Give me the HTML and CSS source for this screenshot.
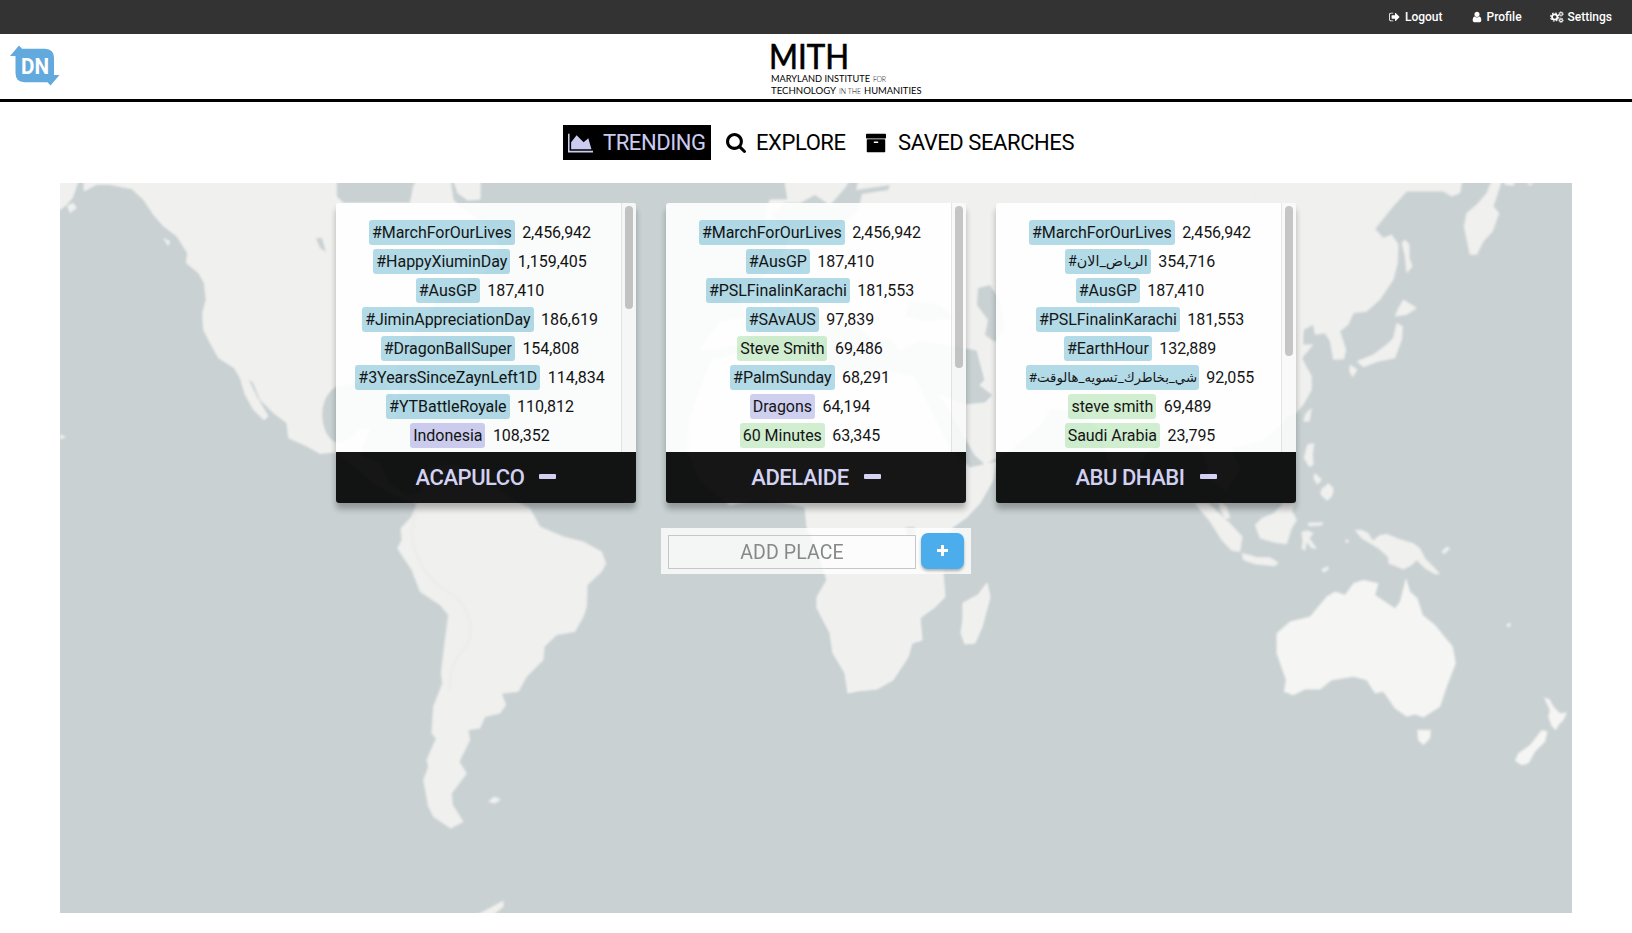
FILE: index.html
```html
<!DOCTYPE html>
<html lang="en">
<head>
<meta charset="utf-8">
<title>DocNow</title>
<link rel="stylesheet" href="styles.css">
</head>
<body>
<nav class="topbar">
  <a class="toplink"><svg class="topicon" viewBox="0 0 1792 1792"><path d="M640 1440q0 4 1 20t.5 26.5-3 23.5-10 19.5-20.5 6.5h-320q-119 0-203.5-84.5t-84.5-203.5v-704q0-119 84.5-203.5t203.5-84.5h320q13 0 22.5 9.5t9.5 22.5q0 4 1 20t.5 26.5-3 23.5-10 19.5-20.5 6.5h-320q-66 0-113 47t-47 113v704q0 66 47 113t113 47h312l11.5 1 11.5 3 8 5.5 7 9 2 13.5zm928-544q0 26-19 45l-544 544q-19 19-45 19t-45-19-19-45v-288h-448q-26 0-45-19t-19-45v-384q0-26 19-45t45-19h448v-288q0-26 19-45t45-19 45 19l544 544q19 19 19 45z"/></svg><span>Logout</span></a>
  <a class="toplink toplink-profile"><svg class="topicon" viewBox="0 0 1792 1792"><path d="M1536 1399q0 109-62.5 187t-150.5 78h-854q-88 0-150.5-78t-62.5-187q0-85 8.5-160.5t31.5-152 58.5-131 94-89 134.5-34.5q131 128 313 128t313-128q76 0 134.5 34.5t94 89 58.5 131 31.5 152 8.5 160.5zm-256-887q0 159-112.5 271.5t-271.5 112.5-271.5-112.5-112.5-271.5 112.5-271.5 271.5-112.5 271.5 112.5 112.5 271.5z"/></svg><span>Profile</span></a>
  <a class="toplink"><svg class="topicon topicon-wide" viewBox="0 0 14 12"><g fill="none" stroke="#fff"><circle cx="4.7" cy="6" r="2.7" stroke-width="1.8"/><circle cx="4.7" cy="6" r="4.1" stroke-width="1.1" stroke-dasharray="1.7 1.52"/><circle cx="11" cy="2.9" r="1.4" stroke-width="1.1"/><circle cx="11" cy="2.9" r="2.3" stroke-width=".7" stroke-dasharray="1 .8"/><circle cx="11" cy="9.3" r="1.4" stroke-width="1.1"/><circle cx="11" cy="9.3" r="2.3" stroke-width=".7" stroke-dasharray="1 .8"/></g></svg><span>Settings</span></a>
</nav>
<header class="header">
  <svg class="dn-logo" viewBox="0 0 50 42"><path d="M0 11 9 .5l3 3.2h23Q44 4 44 13v17h5.5L40.500 40.500 37.500 37.300H14.500Q5.500 37 5.500 28V11z" fill="#62a9dd"/><text x="11" y="28.600" class="dn-text" textLength="28" lengthAdjust="spacingAndGlyphs">DN</text></svg>
  <svg class="mith-logo" viewBox="0 0 152 56">
    <text x="-2" y="27" class="mith-big" textLength="80" lengthAdjust="spacingAndGlyphs">MITH</text>
    <text x="0" y="40.300" class="mith-line" textLength="99" lengthAdjust="spacingAndGlyphs">MARYLAND INSTITUTE</text>
    <text x="102" y="40.300" class="mith-small" textLength="13">FOR</text>
    <text x="0" y="51.700" class="mith-line" textLength="65" lengthAdjust="spacingAndGlyphs">TECHNOLOGY</text>
    <text x="68" y="51.700" class="mith-small" textLength="22">IN THE</text>
    <text x="93" y="51.700" class="mith-line" textLength="57.500" lengthAdjust="spacingAndGlyphs">HUMANITIES</text>
  </svg>
</header>
<div class="tabs">
  <a class="tab tab-active"><svg class="tabicon tabicon-chart" viewBox="0 0 2048 1792"><path d="M2048 1536v128h-2048v-1536h128v1408h1920zm-384-1024l256 896h-1664v-576l448-576 576 576z"/></svg><span>TRENDING</span></a>
  <a class="tab tab-explore"><svg class="tabicon" viewBox="64 128 1664 1664"><path d="M1216 832q0-185-131.500-316.500t-316.500-131.500-316.500 131.500-131.500 316.500 131.500 316.500 316.500 131.500 316.500-131.500 131.500-316.500zm512 832q0 52-38 90t-90 38q-54 0-90-38l-343-342q-179 124-399 124-143 0-273.500-55.500t-225-150-150-225-55.500-273.500 55.500-273.500 150-225 225-150 273.500-55.500 273.500 55.500 225 150 150 225 55.500 273.500q0 220-124 399l343 343q37 37 37 90z"/></svg><span>EXPLORE</span></a>
  <a class="tab tab-saved"><svg class="tabicon" viewBox="64 64 1664 1664"><path d="M1088 832q0-26-19-45t-45-19h-256q-26 0-45 19t-19 45 19 45 45 19h256q26 0 45-19t19-45zm576-192v960q0 26-19 45t-45 19h-1408q-26 0-45-19t-19-45v-960q0-26 19-45t45-19h1408q26 0 45 19t19 45zm64-448v256q0 26-19 45t-45 19h-1536q-26 0-45-19t-19-45v-256q0-26 19-45t45-19h1536q26 0 45 19t19 45z"/></svg><span>SAVED SEARCHES</span></a>
</div>
<main class="stage">
  <svg class="map" viewBox="60 183 1512 730">
    <defs><filter id="soft" x="-5%" y="-5%" width="110%" height="110%"><feGaussianBlur stdDeviation="1"/></filter></defs>
    <g filter="url(#soft)">
      <g class="land" transform="translate(60 183) scale(.33333)">
        <path d="M-20-20H60L50 10 38 45 15 70-20 95zM22 68 40 60 50 75 30 90zM70-20H830V40L850 60H1050L1060 10 1075-20H1170L1180 50 1210 80 1280 130 1320 190 1290 260 1220 290 1140 330 1100 400 1040 480 1010 560 1020 640 1000 650 980 600 900 600 828 610Q785 640 786 700 790 760 828 780L870 770 900 740 930 735 910 790 900 820 960 840 985 900 1040 940 1110 920 1070 960 1000 935 940 900 880 845 828 808 780 812 740 790 685 765 680 720 640 690 600 650 580 600 565 588 590 640 625 700 612 712 580 680 555 635 540 585 522 555 475 525 450 480 430 440 427 390 438 350 432 300 415 270 378 240 382 210 350 160 310 130 280 95 250 50 215 18 150 5 110 5 72 25z"/>
        <path d="M310 165 330 175 325 190zM980 640 1010 690 1000 710 980 690zM0 755 18 762 0 768z"/>
      </g>
      <path class="land" d="M480 175H452L458 193 468 200 480 199z"/>
      <g class="land" transform="translate(380 480) scale(.33333)">
        <path d="M110 70 95 110 62 145 65 180 52 205 95 270 120 335 180 375 205 405 195 480 183 580 187 610 160 680 155 760 168 775 140 840 145 860 130 900 145 980 160 1010 212 1045 250 1025 218 975 215 940 260 880 238 845 270 780 265 750 300 745 315 710 360 700 378 675 365 640 415 635 440 590 490 540 493 500 530 465 585 455 610 410 620 380 622 315 665 275 678 250 665 215 610 185 550 170 480 140 450 85 400 60 330 10 240-40 190-50 120-20 130 20zM325 965 342 950 362 958 345 970zM260 1320 310 1295 370 1262 370 1280 320 1320z"/>
      </g>
      <path class="land" d="M700 350 720 322 745 318 738 290 760 280 780 262 790 240 765 225 770 200 788 200 784 175H1310L1300 400 1280 425 1262 440 1230 448 1240 470 1225 490 1210 478 1205 455 1190 430 1170 430 1140 460 1130 490 1115 480 1100 430 1080 410 1050 408 1040 425 1010 450 985 464 975 455 950 410 940 395 965 405 985 403 993 395 980 385 985 380 977 350 950 345 920 340 900 350 890 338 870 340 860 325 830 325 815 310 800 318 780 305 760 325 740 345z"/>
      <path class="land" d="M712 360 760 350 800 348 815 360 840 372 880 370 915 378 930 410 950 450 970 468 996 462 993 480 980 503 967 517 953 527 940 543 943 573 945 597 935 607 920 618 922 640 912 643 908 657 893 680 877 689 857 691 848 693 845 673 833 653 830 633 817 608 817 597 827 580 820 557 807 527 805 507 787 503 760 498 730 505 700 480 688 450 690 420 700 390z"/>
      <path class="land" d="M987 583 990 597 982 627 975 643 965 644 961 633 963 620 963 603 978 595z"/>
      <path class="water" d="M978 288 990 285 1000 300 1005 330 995 342 985 335 988 320 977 305zM910 300 940 305 955 318 925 322 905 316zM905 528 914 527 917 533 908 537zM770 215 785 203 800 203 815 195 830 205 845 188 850 180 858 182 856 190 890 185 888 190 862 194 858 212 835 228 800 228 790 235z"/>
      <g class="land" transform="translate(1270 183) scale(.33333)">
        <path d="M-60-30H590L575 0 570 30 545 40 520 25H410L365 75 315 138 340 165 365 155 385 185 383 240 370 290 330 350 290 385 250 390 235 425 210 445 228 500 222 528 190 530 180 475 165 450 135 455 130 425 100 440 80 460 90 485 130 485 95 525 125 580 125 620 100 665 78 690-60 760zM395 180 405 170 418 185 418 225 427 250 410 270 405 220zM400 350 440 375 410 395 375 400 385 375zM380 420 398 430 395 470 375 525 325 535 280 552 260 535 310 515 350 485 370 465zM240 545 262 560 248 582 238 565zM125 675 118 715 100 715 108 690zM112 785 132 780 128 815 130 845 118 852 102 825zM135 870 155 890 142 905 130 885zM175 900 190 915 185 940 170 952 150 930zM700-20 690 10 670 70 687 90 668 145 640 175 620 215 600 215 590 170 582 130 590 90 620 65 650 30 670-20zM700-20 740-20 730 8 705 5zM770 0 790 0 780 8z"/>
      </g>
      <g class="land" transform="translate(1180 480) scale(.33333)">
        <path d="M45 70 85 70 150 130 187 170 180 215 155 212 125 180 90 125zM118 65 140 80 150 115 135 115 120 85zM185 220 210 225 230 232 270 232 295 248 285 258 225 252 190 240zM345 70 335 90 350 120 335 145 320 192 285 188 240 175 225 135 245 115 280 100 310 70zM385 128 430 128 425 136 385 138zM365 155 385 152 400 160 388 175 410 205 395 205 380 185 375 212 365 205 368 185zM425 268 445 258 445 268 430 278zM495 178 508 182 500 190zM525 150 545 150 565 160 578 182 600 165 620 162 660 178 700 190 720 205 735 235 765 265 780 282 765 282 735 265 710 240 695 255 670 268 640 255 625 250 625 232 595 205 570 190 545 175zM785 215 800 200 810 205 792 222zM425 25 445 15 460 35 445 60 425 45z"/>
        <path class="bright" d="M290 460 330 425 390 410 440 350 465 335 495 345 520 310 550 300 595 310 585 345 645 385 660 365 678 295 690 335 712 355 728 405 765 435 818 500 827 550 800 620 780 680 730 712 705 703 680 710 645 685 610 635 585 640 560 600 520 590 455 600 420 628 375 628 340 645 312 635 318 600 290 520zM712 750 752 750 750 775 730 795 715 780zM1092 652 1108 658 1120 680 1140 700 1160 698 1150 720 1135 735 1128 750 1115 738 1105 710 1110 690zM1085 750 1102 755 1095 785 1065 815 1045 850 1025 855 1005 842 1015 820 1050 795 1070 770zM980 432 992 430 990 440 982 440z"/>
      </g>
      <path class="water" d="M316 238 322 238 326 252 320 248z"/>
      <path class="ridge" d="M418 507C403 540 420 575 448 592 470 605 475 630 467 645 455 658 449 670 450 690"/>
    </g>
  </svg>
  <div class="cards">
    <section class="card">
      <div class="card-body">
        <ul class="trends">
          <li><span class="tag hash">#MarchForOurLives</span><span class="count">2,456,942</span></li>
          <li><span class="tag hash">#HappyXiuminDay</span><span class="count">1,159,405</span></li>
          <li><span class="tag hash">#AusGP</span><span class="count">187,410</span></li>
          <li><span class="tag hash">#JiminAppreciationDay</span><span class="count">186,619</span></li>
          <li><span class="tag hash">#DragonBallSuper</span><span class="count">154,808</span></li>
          <li><span class="tag hash">#3YearsSinceZaynLeft1D</span><span class="count">114,834</span></li>
          <li><span class="tag hash">#YTBattleRoyale</span><span class="count">110,812</span></li>
          <li><span class="tag noun">Indonesia</span><span class="count">108,352</span></li>
        </ul>
        <div class="track"><div class="thumb" style="height:103px"></div></div>
      </div>
      <footer class="card-foot"><span>ACAPULCO</span><i class="minus"></i></footer>
    </section>
    <section class="card">
      <div class="card-body">
        <ul class="trends">
          <li><span class="tag hash">#MarchForOurLives</span><span class="count">2,456,942</span></li>
          <li><span class="tag hash">#AusGP</span><span class="count">187,410</span></li>
          <li><span class="tag hash">#PSLFinalinKarachi</span><span class="count">181,553</span></li>
          <li><span class="tag hash">#SAvAUS</span><span class="count">97,839</span></li>
          <li><span class="tag name">Steve Smith</span><span class="count">69,486</span></li>
          <li><span class="tag hash">#PalmSunday</span><span class="count">68,291</span></li>
          <li><span class="tag noun">Dragons</span><span class="count">64,194</span></li>
          <li><span class="tag name">60 Minutes</span><span class="count">63,345</span></li>
        </ul>
        <div class="track"><div class="thumb" style="height:162px"></div></div>
      </div>
      <footer class="card-foot"><span>ADELAIDE</span><i class="minus"></i></footer>
    </section>
    <section class="card">
      <div class="card-body">
        <ul class="trends">
          <li><span class="tag hash">#MarchForOurLives</span><span class="count">2,456,942</span></li>
          <li><span class="tag hash tag-ar1">#الرياض_الان</span><span class="count">354,716</span></li>
          <li><span class="tag hash">#AusGP</span><span class="count">187,410</span></li>
          <li><span class="tag hash">#PSLFinalinKarachi</span><span class="count">181,553</span></li>
          <li><span class="tag hash">#EarthHour</span><span class="count">132,889</span></li>
          <li><span class="tag hash tag-ar2">#شي_بخاطرك_تسويه_هالوقت</span><span class="count">92,055</span></li>
          <li><span class="tag name">steve smith</span><span class="count">69,489</span></li>
          <li><span class="tag name">Saudi Arabia</span><span class="count">23,795</span></li>
        </ul>
        <div class="track"><div class="thumb" style="height:150px"></div></div>
      </div>
      <footer class="card-foot"><span>ABU DHABI</span><i class="minus"></i></footer>
    </section>
  </div>
  <div class="add">
    <input class="add-input" placeholder="ADD PLACE">
    <button class="add-btn"><svg class="plus" viewBox="0 0 11 11"><path d="M4 0h3v4h4v3H7v4H4V7H0V4h4z"/></svg></button>
  </div>
</main>
</body>
</html>
```
FILE: styles.css
```css
* { box-sizing: border-box; }
body { margin: 0; height: 933px; overflow: hidden; background: #fff; font-family: Roboto, sans-serif; color: #000; }

.topbar { height: 34px; background: #333; display: flex; justify-content: flex-end; align-items: center; gap: 28px; padding-right: 20px; color: #fff; font-size: 12px; font-weight: 500; }
.toplink { display: flex; align-items: center; gap: 4px; }
.topicon { width: 12px; height: 12px; fill: #fff; }
.topicon-wide { width: 14px; }

.header { height: 68px; border-bottom: 3px solid #000; display: flex; justify-content: space-between; align-items: flex-start; padding: 11px 709px 0 10px; }
.dn-logo { width: 50px; height: 42px; }
.dn-text { font-size: 22.5px; font-weight: 700; fill: #fff; }
.mith-logo { width: 152px; height: 56px; margin-top: -3px; overflow: visible; }
.mith-big { font: 400 34.5px Lato, sans-serif; stroke: #000; stroke-width: .7px; }
.mith-line { font: 400 10.2px Lato, sans-serif; }
.mith-small { font: 300 7px Lato, sans-serif; }

.tabs { display: flex; height: 81px; padding: 23px 0 0 563px; font-size: 22px; letter-spacing: -.42px; }
.tab { display: flex; align-items: center; height: 35px; flex: none; white-space: nowrap; }
.tab-active { background: #000; color: #ccccf0; width: 148px; padding-left: 5px; gap: 10px; }
.tab-explore { margin-left: 15px; gap: 10px; width: 140px; }
.tab-saved { gap: 12px; }
.tabicon { width: 20px; height: 20px; fill: currentColor; }
.tabicon-chart { width: 25px; height: 22px; }

.stage { position: relative; margin: 0 60px; height: 730px; padding-top: 20px; background: #c9d1d3; display: flex; flex-direction: column; align-items: center; }
.map { position: absolute; inset: 0; width: 1512px; height: 730px; }
.land { fill: #f0f0ee; stroke: #f5f5f4; stroke-width: 1; }
.bright { fill: #f5f5f3; }
.water { fill: #c9d1d3; }
.ridge { fill: none; stroke: #ebebe9; stroke-width: 2; }

.cards { position: relative; display: flex; gap: 30px; }
.card { width: 300px; height: 300px; opacity: .91; border-radius: 3px; box-shadow: 0 6px 6px rgba(0,0,0,.3); overflow: hidden; display: flex; flex-direction: column; }
.card-body { height: 249px; display: flex; background: #fff; }
.trends { list-style: none; margin: 0; padding: 17px 0 0 3px; width: 285px; display: flex; flex-direction: column; gap: 4px; font-size: 16px; letter-spacing: -.04px; }
.trends li { display: flex; height: 25px; justify-content: center; align-items: center; gap: 7.5px; white-space: nowrap; }
.tag { height: 25px; line-height: 25px; padding: 0 3px; border-radius: 3px; }
.count { line-height: 25px; height: 25px; }
.hash { background: #add8e6; }
.noun { background: #ccccf0; }
.name { background: #ceeecd; }
.tag-ar1, .tag-ar2 { font-family: Roboto, "DejaVu Sans", sans-serif; text-align: center; }
.tag-ar1 { width: 86px; font-size: 14.3px; }
.tag-ar2 { width: 173px; font-size: 13.3px; }
.track { width: 15px; background: #fafafa; border-left: 1px solid #e4e4e4; padding: 3px 0 0 3px; }
.thumb { width: 8px; border-radius: 4px; background: #c1c1c1; }
.card-foot { height: 51px; background: #000; color: #d2d0f5; display: flex; justify-content: center; align-items: center; gap: 15px; font-size: 22px; font-weight: 500; letter-spacing: -.45px; }
.minus { width: 17px; height: 5px; margin-bottom: 2px; border-radius: 1px; background: #d2d0f5; }

.add { position: relative; margin-top: 25px; width: 310px; height: 46px; padding: 5px 7px; background: rgba(255,255,255,.8); display: flex; justify-content: space-between; }
.add-input { width: 248px; height: 34px; margin-top: 2px; padding: 0; border: 1px solid #c6c8c8; background: transparent; font: 19.5px Roboto, sans-serif; letter-spacing: .1px; text-align: center; }
.add-input::placeholder { color: #878988; }
.add-btn { width: 43px; height: 36px; padding: 0 0 2px; border: 0; border-radius: 7px; background: #4badec; box-shadow: 0 2px 3px rgba(0,0,0,.3); display: flex; align-items: center; justify-content: center; }
.plus { width: 11px; height: 11px; fill: #fff; }
```
